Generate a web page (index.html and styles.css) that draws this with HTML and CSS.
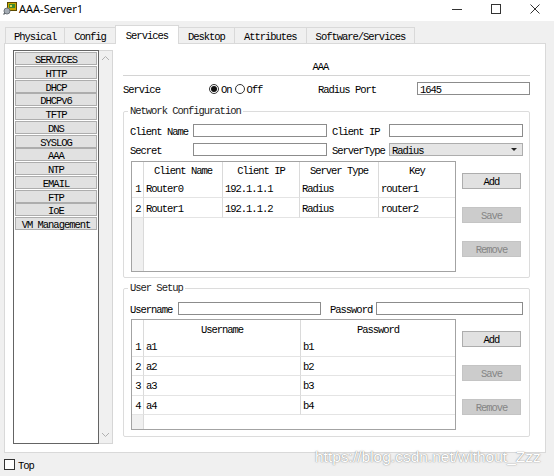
FILE: index.html
```html
<!DOCTYPE html>
<html>
<head>
<meta charset="utf-8">
<title>AAA-Server1</title>
<link rel="stylesheet" href="styles.css">
</head>
<body>
<header class="titlebar">
  <svg class="app-icon" width="14" height="13" viewBox="0 0 14 13">
    <rect x="4.5" y="0.5" width="9" height="8" fill="#c9a800" stroke="#5b4a00"/>
    <rect x="6" y="2" width="6" height="4" fill="#3d8a2e"/>
    <rect x="7" y="3" width="2" height="2" fill="#e8d24a"/>
    <circle cx="4" cy="9" r="3" fill="#a4abb3" stroke="#6c737a"/>
    <path d="M2 11 L0.5 12.5" stroke="#5c6369" stroke-width="1.2"/>
  </svg>
  <span class="title">AAA-Server1</span>
  <div class="controls">
    <div class="ctl"><svg width="10" height="10" viewBox="0 0 10 10"><path d="M0 5.5 H10" stroke="#333" stroke-width="1"/></svg></div>
    <div class="ctl"><svg width="10" height="10" viewBox="0 0 10 10"><rect x="0.5" y="0.5" width="9" height="9" fill="none" stroke="#333"/></svg></div>
    <div class="ctl"><svg width="10" height="10" viewBox="0 0 10 10"><path d="M0.5 0.5 L9.5 9.5 M9.5 0.5 L0.5 9.5" stroke="#333" stroke-width="1"/></svg></div>
  </div>
</header>

<nav class="tabs">
  <div class="tab first">Physical</div>
  <div class="tab">Config</div>
  <div class="tab active">Services</div>
  <div class="tab">Desktop</div>
  <div class="tab">Attributes</div>
  <div class="tab">Software/Services</div>
</nav>

<section class="panel">
  <div class="sidebar">
    <div class="list">
      <div class="item">SERVICES</div>
      <div class="item">HTTP</div>
      <div class="item">DHCP</div>
      <div class="item">DHCPv6</div>
      <div class="item">TFTP</div>
      <div class="item">DNS</div>
      <div class="item">SYSLOG</div>
      <div class="item">AAA</div>
      <div class="item">NTP</div>
      <div class="item">EMAIL</div>
      <div class="item">FTP</div>
      <div class="item">IoE</div>
      <div class="item">VM Management</div>
    </div>
    <div class="scrollbar">
      <svg width="9" height="6" viewBox="0 0 9 6"><path d="M1 5 L4.5 1.5 L8 5" fill="none" stroke="#b0b0b0"/></svg>
      <svg width="9" height="6" viewBox="0 0 9 6"><path d="M1 1 L4.5 4.5 L8 1" fill="none" stroke="#b0b0b0"/></svg>
    </div>
  </div>

  <div class="content">
    <div class="heading">AAA</div>

    <div class="svc-row">
      <span class="txt">Service</span>
      <div class="radios">
        <span class="radio on"></span><span class="txt rlabel">On</span>
        <span class="radio"></span><span class="txt">Off</span>
      </div>
      <span class="txt">Radius Port</span>
      <div class="field">1645</div>
    </div>

    <fieldset class="group net">
      <legend>Network Configuration</legend>
      <div class="form-grid">
        <span class="txt">Client Name</span>
        <div class="field"></div>
        <span class="txt lbl2">Client IP</span>
        <div class="field"></div>
        <span class="txt">Secret</span>
        <div class="field"></div>
        <span class="txt lbl2">ServerType</span>
        <div class="select"><span class="txt">Radius</span><span class="arrow"></span></div>
      </div>
      <div class="table-row">
        <div class="tbl">
          <div class="grid grid1">
            <div class="rn h"></div>
            <div class="c h">Client Name</div>
            <div class="c h">Client IP</div>
            <div class="c h">Server Type</div>
            <div class="c h">Key</div>

            <div class="rn d">1</div>
            <div class="c d">Router0</div>
            <div class="c d">192.1.1.1</div>
            <div class="c d">Radius</div>
            <div class="c d">router1</div>

            <div class="rn d">2</div>
            <div class="c d">Router1</div>
            <div class="c d">192.1.1.2</div>
            <div class="c d">Radius</div>
            <div class="c d">router2</div>
          </div>
        </div>
        <div class="btns">
          <div class="btn">Add</div>
          <div class="btn off">Save</div>
          <div class="btn off">Remove</div>
        </div>
      </div>
    </fieldset>

    <fieldset class="group users">
      <legend>User Setup</legend>
      <div class="user-grid">
        <span class="txt">Username</span>
        <div class="field"></div>
        <span class="txt lbl3">Password</span>
        <div class="field"></div>
      </div>
      <div class="table-row t2">
        <div class="tbl">
          <div class="grid grid2">
            <div class="rn h"></div>
            <div class="c h">Username</div>
            <div class="c h">Password</div>

            <div class="rn d">1</div>
            <div class="c d">a1</div>
            <div class="c d">b1</div>

            <div class="rn d">2</div>
            <div class="c d">a2</div>
            <div class="c d">b2</div>

            <div class="rn d">3</div>
            <div class="c d">a3</div>
            <div class="c d">b3</div>

            <div class="rn d">4</div>
            <div class="c d">a4</div>
            <div class="c d">b4</div>
          </div>
        </div>
        <div class="btns">
          <div class="btn">Add</div>
          <div class="btn off">Save</div>
          <div class="btn off">Remove</div>
        </div>
      </div>
    </fieldset>
  </div>
</section>

<footer class="bottom">
  <span class="check"></span>
  <span class="txt">Top</span>
</footer>

<div class="watermark">https://blog.csdn.net/without_Zzz</div>
</body>
</html>
```

FILE: styles.css
```css
* { box-sizing: border-box; }
html, body { margin: 0; }
body {
  width: 554px;
  height: 476px;
  overflow: hidden;
  position: relative;
  background: #f0f0f0;
  color: #000;
  font-family: "Liberation Mono", "DejaVu Sans Mono", monospace;
  font-size: 10.5px;
  letter-spacing: -1.03px;
  line-height: 12px;
}

/* text that sits a little low in its line, like the original bitmap font */
.txt { padding-top: 3px; line-height: 9px; }

/* title bar */
.titlebar {
  height: 21px;
  background: #fff;
  display: flex;
  align-items: flex-start;
}
.app-icon { margin: 2px 0 0 3px; flex: none; }
.title {
  font-family: "Noto Sans", "Liberation Sans", sans-serif;
  font-size: 11px;
  letter-spacing: 0;
  line-height: 14px;
  margin: 2px 0 0 2px;
  color: #000;
}
.controls { margin-left: auto; display: flex; }
.ctl {
  width: 39px;
  height: 18px;
  display: flex;
  align-items: center;
  justify-content: center;
}

/* tabs */
.tabs {
  display: flex;
  align-items: flex-end;
  height: 18px;
  margin-top: 4px;
  padding-left: 5px;
}
.tab {
  height: 16px;
  padding: 3px 9px 0;
  border: 1px solid #d9d9d9;
  border-bottom: none;
  margin-right: -1px;
  line-height: 12px;
  background: #f0f0f0;
}
.tab.first { padding: 3px 8px 0 8px; }
.tab.active {
  height: 19px;
  padding: 3px 10px 0;
  background: #fff;
  margin-bottom: -1px;
  position: relative;
  z-index: 1;
  line-height: 15px;
}

/* panel */
.panel {
  display: flex;
  gap: 10px;
  width: 542px;
  margin-left: 4px;
  border: 1px solid #d9d9d9;
  background: #fff;
  padding: 6px 15px 8px 8px;
}
.sidebar { display: flex; width: 100px; height: 394px; flex: none; }
.list {
  width: 86px;
  border: 1px solid #646464;
  padding: 1px 0 0 1px;
  background: #fff;
}
.item {
  width: 82px;
  height: 13px;
  margin-bottom: 0.75px;
  background: #e1e1e1;
  border: 1px solid #adadad;
  text-align: center;
  padding-top: 3px;
  line-height: 8px;
  white-space: nowrap;
}
.scrollbar {
  width: 14px;
  border: 1px solid #d6d6d6;
  border-left: none;
  background: #f0f0f0;
  display: flex;
  flex-direction: column;
  justify-content: space-between;
  align-items: center;
  padding: 4px 0 5px;
}

.content { flex: 1; display: flex; flex-direction: column; min-width: 0; }
.heading {
  margin-top: 10px;
  padding: 3px 12px 3px 0;
  line-height: 9px;
  border-bottom: 1px solid #d4d4d4;
  text-align: center;
}
.svc-row {
  display: grid;
  grid-template-columns: 86px 109px 99px 1fr;
  align-items: center;
  height: 13px;
  margin-top: 6px;
}
.radios { display: flex; align-items: center; }
.radio {
  width: 10px;
  height: 10px;
  border: 1px solid #333;
  border-radius: 50%;
  background: #fff;
  display: flex;
  align-items: center;
  justify-content: center;
  margin-right: 2px;
}
.radio.on::after {
  content: "";
  width: 6px;
  height: 6px;
  border-radius: 50%;
  background: #111;
}
.rlabel { margin-right: 3px; }

.field {
  height: 13px;
  border: 1px solid #8c8c8c;
  background: #fff;
  padding: 3px 2px 0;
  line-height: 8px;
}
.select {
  height: 13px;
  border: 1px solid #adadad;
  background: #e5e5e5;
  padding: 0 5px 0 2px;
  display: flex;
  justify-content: space-between;
  align-items: center;
}
.arrow {
  width: 0;
  height: 0;
  border-left: 3px solid transparent;
  border-right: 3px solid transparent;
  border-top: 3px solid #222;
}

fieldset.group {
  margin: 10px 0 0;
  padding: 0 6px 5px;
  border: 1px solid #dcdcdc;
  border-radius: 2px;
  min-width: 0;
}
fieldset.users { margin-top: 4px; padding-bottom: 6px; }
legend {
  padding: 0 2px;
  margin-left: -2px;
  line-height: 13px;
  color: #222;
}
.form-grid {
  display: grid;
  grid-template-columns: 63px 134px 62px 1fr;
  grid-auto-rows: 13px;
  row-gap: 6px;
  align-items: center;
  margin-top: 6px;
}
.lbl2 { padding-left: 5px; }
.user-grid {
  display: grid;
  grid-template-columns: 48px 143px 55px 1fr;
  height: 13px;
  align-items: center;
  margin-top: 7px;
}
.lbl3 { padding-left: 9px; }

.table-row { display: flex; gap: 6px; margin: 5px 0 0 1px; }
.table-row.t2 { margin-top: 4px; }
.tbl {
  width: 325px;
  height: 111px;
  flex: none;
  border: 1px solid #a3a3a3;
  background: linear-gradient(to right, #f0f0f0 11px, #dadada 11px, #dadada 12px, #fff 12px);
}
.grid { display: grid; }
.grid1 { grid-template-columns: 11px 79px 77px 79px 1fr; }
.grid2 { grid-template-columns: 11px 157px 1fr; }
.c {
  background: #fff;
  border-left: 1px solid #dadada;
  padding-left: 2px;
  white-space: nowrap;
  overflow: hidden;
}
.rn { background: #fff; text-align: center; padding-left: 1px; }
.h { text-align: center; padding-left: 0; }
.grid1 .h { height: 16px; padding-top: 3px; line-height: 13px; }
.grid1 .d { height: 20px; padding-top: 3px; line-height: 16px; border-bottom: 1px solid #e4e4e4; }
.grid2 .h { height: 17px; padding-top: 3px; line-height: 14px; }
.grid2 .d { height: 19.5px; padding-top: 3px; line-height: 15.5px; border-bottom: 1px solid #e4e4e4; }

.btns {
  display: flex;
  flex-direction: column;
  gap: 18px;
  padding-top: 12px;
  width: 59px;
}
.btn {
  height: 16px;
  border: 1px solid #adadad;
  background: #e1e1e1;
  text-align: center;
  padding-top: 3px;
  line-height: 11px;
}
.btn.off { background: #cccccc; border-color: #c4c4c4; color: #858585; }

/* bottom */
.bottom {
  display: flex;
  align-items: center;
  gap: 3px;
  height: 11px;
  margin: 6px 0 0 4px;
}
.check {
  width: 11px;
  height: 11px;
  border: 1px solid #333;
  background: #fff;
}

.watermark {
  position: absolute;
  left: 315px;
  top: 448px;
  font-family: "Liberation Sans", Arial, sans-serif;
  font-size: 15.5px;
  letter-spacing: 0;
  line-height: 18px;
  color: #fff;
  text-shadow: 0 0 1px rgba(80, 80, 80, 0.75), 0 0 2px rgba(150, 150, 150, 0.5);
}
```
